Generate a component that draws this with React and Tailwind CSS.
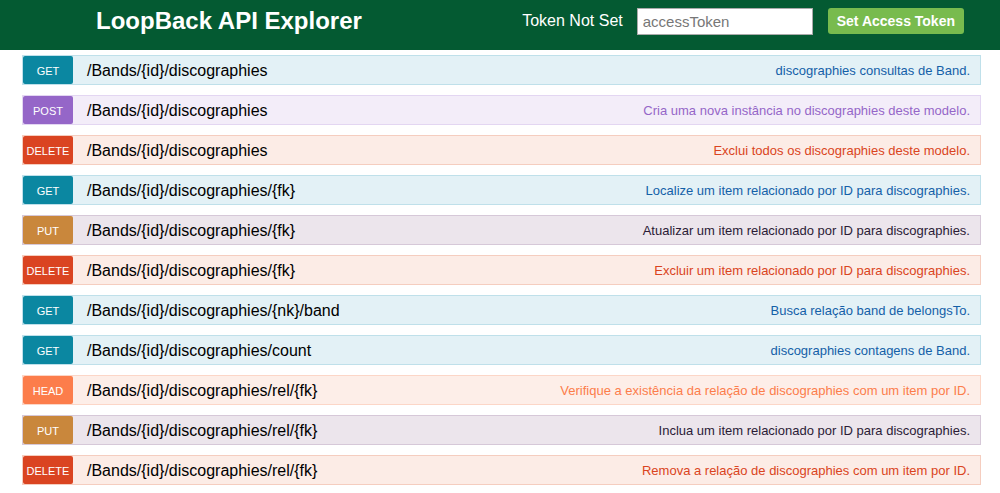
const styles = {
  GET: {
    row: "bg-[#e3f1f6] border-[#bfe0ea]",
    badge: "bg-[#0b87a1]",
    text: "text-[#1460a8]",
  },
  POST: {
    row: "bg-[#f3edf9] border-[#e3d6f2]",
    badge: "bg-[#9566c8]",
    text: "text-[#9566c8]",
  },
  DELETE: {
    row: "bg-[#fcece6] border-[#f5cdbf]",
    badge: "bg-[#da4421]",
    text: "text-[#da4421]",
  },
  PUT: {
    row: "bg-[#ece5ec] border-[#d6c8d8]",
    badge: "bg-[#c9873c]",
    text: "text-[#2b1b36]",
  },
  HEAD: {
    row: "bg-[#fdeee8] border-[#fcd6c7]",
    badge: "bg-[#fc7d4b]",
    text: "text-[#fc7d4b]",
  },
}

const endpoints = [
  ["GET", "/Bands/{id}/discographies", "discographies consultas de Band."],
  ["POST", "/Bands/{id}/discographies", "Cria uma nova instância no discographies deste modelo."],
  ["DELETE", "/Bands/{id}/discographies", "Exclui todos os discographies deste modelo."],
  ["GET", "/Bands/{id}/discographies/{fk}", "Localize um item relacionado por ID para discographies."],
  ["PUT", "/Bands/{id}/discographies/{fk}", "Atualizar um item relacionado por ID para discographies."],
  ["DELETE", "/Bands/{id}/discographies/{fk}", "Excluir um item relacionado por ID para discographies."],
  ["GET", "/Bands/{id}/discographies/{nk}/band", "Busca relação band de belongsTo."],
  ["GET", "/Bands/{id}/discographies/count", "discographies contagens de Band."],
  ["HEAD", "/Bands/{id}/discographies/rel/{fk}", "Verifique a existência da relação de discographies com um item por ID."],
  ["PUT", "/Bands/{id}/discographies/rel/{fk}", "Inclua um item relacionado por ID para discographies."],
  ["DELETE", "/Bands/{id}/discographies/rel/{fk}", "Remova a relação de discographies com um item por ID."],
]

const Endpoint = ({ method, path, summary }) => {
  const s = styles[method]
  return (
    <div className={`flex items-center h-[30px] border ${s.row}`}>
      <span
        className={`w-[50px] h-[28px] pt-[2px] flex items-center justify-center rounded-[2px] text-white text-[11px] ${s.badge}`}
      >
        {method}
      </span>
      <span className="ml-[14px] pt-[1px] text-[16px] text-black">{path}</span>
      <span className={`ml-auto pr-[10px] pt-[1px] text-[13px] ${s.text}`}>{summary}</span>
    </div>
  )
}

export default function App() {
  return (
    <div className="min-h-[493px] bg-white font-['Liberation_Sans',Arial,sans-serif]">
      <header className="h-[50px] pb-[8px] bg-[#045a32] flex items-center">
        <h1 className="ml-[96px] text-white text-[24px] font-bold">LoopBack API Explorer</h1>
        <div className="ml-auto flex items-center mr-[36px]">
          <span className="text-white text-[16px]">Token Not Set</span>
          <input
            type="text"
            placeholder="accessToken"
            className="ml-[14px] w-[176px] h-[27px] bg-white border border-[#aaaaaa] px-[5px] text-[15px] placeholder:text-[#777777] outline-none"
          />
          <button className="ml-[15px] h-[26px] px-[9px] rounded-[3px] bg-[#78bb4e] text-white text-[14px] font-bold">
            Set Access Token
          </button>
        </div>
      </header>
      <div className="pl-[22px] pr-[19px] pt-[5px] flex flex-col gap-[10px]">
        {endpoints.map(([method, path, summary], i) => (
          <Endpoint key={i} method={method} path={path} summary={summary} />
        ))}
      </div>
    </div>
  )
}
